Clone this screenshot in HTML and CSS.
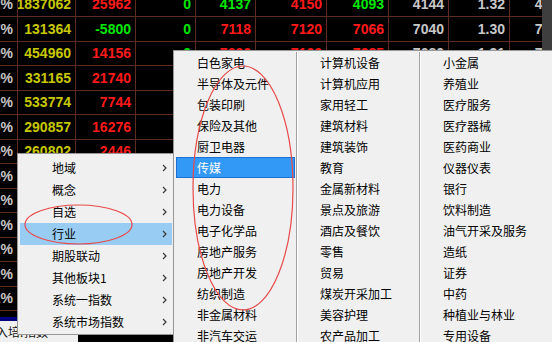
FILE: index.html
```html
<!DOCTYPE html>
<html lang="zh">
<head>
<meta charset="utf-8">
<title>行业菜单</title>
<link rel="stylesheet" href="styles.css">
</head>
<body>
<div class="screen">
  <div class="quote">
    <div class="board">
      <div class="grid">
        <div class="row"><span class="c w">0.52%</span><span class="c y">1837062</span><span class="c r">25962</span><span class="c g">0</span><span class="c g">4137</span><span class="c r">4150</span><span class="c g">4093</span><span class="c w">4144</span><span class="c w">1.32</span><span class="c w">4140</span></div>
        <div class="row"><span class="c w">1.77%</span><span class="c y">131364</span><span class="c g">-5800</span><span class="c g">0</span><span class="c r">7118</span><span class="c r">7120</span><span class="c r">7066</span><span class="c w">7040</span><span class="c w">1.30</span><span class="c w">7045</span></div>
        <div class="row"><span class="c w">0.90%</span><span class="c y">454960</span><span class="c r">14156</span><span class="c g">0</span><span class="c r">7096</span><span class="c r">7100</span><span class="c r">7085</span><span class="c w">7080</span><span class="c w">1.31</span><span class="c w">7082</span></div>
        <div class="row"><span class="c w">2.10%</span><span class="c y">331165</span><span class="c r">21740</span><span class="c g">0</span><span class="c r">5210</span><span class="c r">5232</span><span class="c r">5180</span><span class="c w">5170</span><span class="c w">1.28</span><span class="c w">5176</span></div>
        <div class="row"><span class="c w">0.63%</span><span class="c y">533774</span><span class="c r">7744</span><span class="c g">0</span><span class="c r">3862</span><span class="c r">3870</span><span class="c g">3841</span><span class="c w">3850</span><span class="c w">1.22</span><span class="c w">3855</span></div>
        <div class="row"><span class="c w">1.26%</span><span class="c y">290857</span><span class="c r">16276</span><span class="c g">0</span><span class="c r">6021</span><span class="c r">6040</span><span class="c r">6002</span><span class="c w">5990</span><span class="c w">1.19</span><span class="c w">5996</span></div>
        <div class="row"><span class="c w">0.35%</span><span class="c y">260802</span><span class="c r">2446</span><span class="c g">0</span><span class="c r">2731</span><span class="c r">2740</span><span class="c g">2715</span><span class="c w">2720</span><span class="c w">1.15</span><span class="c w">2722</span></div>
        <div class="row"><span class="c w">1.05%</span><span class="c y">185620</span><span class="c r">9312</span><span class="c g">0</span><span class="c r">4410</span><span class="c r">4422</span><span class="c r">4398</span><span class="c w">4390</span><span class="c w">1.12</span><span class="c w">4394</span></div>
        <div class="row"><span class="c w">0.42%</span><span class="c y">97340</span><span class="c r">3188</span><span class="c g">0</span><span class="c r">1980</span><span class="c r">1992</span><span class="c g">1970</span><span class="c w">1975</span><span class="c w">1.10</span><span class="c w">1978</span></div>
        <div class="row"><span class="c w">0.12%</span><span class="c y">412530</span><span class="c r">12804</span><span class="c g">0</span><span class="c r">8230</span><span class="c r">8244</span><span class="c r">8211</span><span class="c w">8200</span><span class="c w">1.08</span><span class="c w">8205</span></div>
        <div class="row"><span class="c w">2.72%</span><span class="c y">76215</span><span class="c g">-1320</span><span class="c g">0</span><span class="c r">3310</span><span class="c r">3321</span><span class="c g">3290</span><span class="c w">3300</span><span class="c w">1.05</span><span class="c w">3302</span></div>
        <div class="row"><span class="c w">1.32%</span><span class="c y">158840</span><span class="c r">6620</span><span class="c g">0</span><span class="c r">2950</span><span class="c r">2961</span><span class="c r">2944</span><span class="c w">2940</span><span class="c w">1.02</span><span class="c w">2942</span></div>
        <div class="row"><span class="c w">0.82%</span><span class="c y">221470</span><span class="c r">8870</span><span class="c g">0</span><span class="c r">5120</span><span class="c r">5131</span><span class="c r">5109</span><span class="c w">5100</span><span class="c w">1.01</span><span class="c w">5104</span></div>
        <div class="row"><span class="c w">0.22%</span><span class="c y">64210</span><span class="c r">1105</span><span class="c g">0</span><span class="c r">1770</span><span class="c r">1778</span><span class="c g">1762</span><span class="c w">1765</span><span class="c w">0.98</span><span class="c w">1767</span></div>
      </div>
      <div class="scrollbar"></div>
    </div>
    <div class="navy"></div>
    <div class="tabs">
      <span class="tab t1">入培:</span>
      <span class="tab t2">指数</span>
      <span class="tabfill"></span>
    </div>
  </div>

  <div class="menu">
    <div class="mi"><span class="lbl">地域</span><svg class="arr" width="5" height="8" viewBox="0 0 5 8"><path d="M1 1 L4 4 L1 7"/></svg></div>
    <div class="mi"><span class="lbl">概念</span><svg class="arr" width="5" height="8" viewBox="0 0 5 8"><path d="M1 1 L4 4 L1 7"/></svg></div>
    <div class="mi"><span class="lbl">自选</span><svg class="arr" width="5" height="8" viewBox="0 0 5 8"><path d="M1 1 L4 4 L1 7"/></svg></div>
    <div class="mi hot"><span class="lbl">行业</span><svg class="arr" width="5" height="8" viewBox="0 0 5 8"><path d="M1 1 L4 4 L1 7"/></svg></div>
    <div class="mi"><span class="lbl">期股联动</span><svg class="arr" width="5" height="8" viewBox="0 0 5 8"><path d="M1 1 L4 4 L1 7"/></svg></div>
    <div class="mi"><span class="lbl">其他板块1</span><svg class="arr" width="5" height="8" viewBox="0 0 5 8"><path d="M1 1 L4 4 L1 7"/></svg></div>
    <div class="mi"><span class="lbl">系统一指数</span><svg class="arr" width="5" height="8" viewBox="0 0 5 8"><path d="M1 1 L4 4 L1 7"/></svg></div>
    <div class="mi"><span class="lbl">系统市场指数</span><svg class="arr" width="5" height="8" viewBox="0 0 5 8"><path d="M1 1 L4 4 L1 7"/></svg></div>
  </div>

  <div class="submenu">
    <div class="col col1">
      <div class="si">白色家电</div>
      <div class="si">半导体及元件</div>
      <div class="si">包装印刷</div>
      <div class="si">保险及其他</div>
      <div class="si">厨卫电器</div>
      <div class="si sel">传媒</div>
      <div class="si">电力</div>
      <div class="si">电力设备</div>
      <div class="si">电子化学品</div>
      <div class="si">房地产服务</div>
      <div class="si">房地产开发</div>
      <div class="si">纺织制造</div>
      <div class="si">非金属材料</div>
      <div class="si">非汽车交运</div>
    </div>
    <div class="sep"></div>
    <div class="col col2">
      <div class="si">计算机设备</div>
      <div class="si">计算机应用</div>
      <div class="si">家用轻工</div>
      <div class="si">建筑材料</div>
      <div class="si">建筑装饰</div>
      <div class="si">教育</div>
      <div class="si">金属新材料</div>
      <div class="si">景点及旅游</div>
      <div class="si">酒店及餐饮</div>
      <div class="si">零售</div>
      <div class="si">贸易</div>
      <div class="si">煤炭开采加工</div>
      <div class="si">美容护理</div>
      <div class="si">农产品加工</div>
    </div>
    <div class="sep"></div>
    <div class="col col3">
      <div class="si">小金属</div>
      <div class="si">养殖业</div>
      <div class="si">医疗服务</div>
      <div class="si">医疗器械</div>
      <div class="si">医药商业</div>
      <div class="si">仪器仪表</div>
      <div class="si">银行</div>
      <div class="si">饮料制造</div>
      <div class="si">油气开采及服务</div>
      <div class="si">造纸</div>
      <div class="si">证券</div>
      <div class="si">中药</div>
      <div class="si">种植业与林业</div>
      <div class="si">专用设备</div>
    </div>
  </div>

  <svg class="marks" width="552" height="342" viewBox="0 0 552 342">
    <ellipse cx="78.5" cy="224.5" rx="53.5" ry="19.5"/>
    <ellipse cx="243" cy="188" rx="50" ry="122"/>
  </svg>
</div>
</body>
</html>
```

FILE: styles.css
```css
html, body {
  margin: 0;
  padding: 0;
  background: #000;
}

.screen {
  position: relative;
  width: 552px;
  height: 342px;
  overflow: hidden;
  background: #000;
  font-family: "Liberation Sans", Arial, sans-serif;
}

.quote {
  display: flex;
  flex-direction: column;
  height: 342px;
}

.board {
  display: flex;
  height: 317px;
  overflow: hidden;
  flex: none;
}

.grid {
  flex: none;
  width: 542px;
  height: 325px;
  margin-top: -7.5px;
  overflow: hidden;
}

.row {
  display: grid;
  grid-template-columns: 18px 58px 60px 60px 60px 71px 62px 60px 61px 60px;
  width: 570px;
  height: 24.5px;
  box-sizing: border-box;
  border-bottom: 1px solid #5e2c1e;
}

.c {
  display: flex;
  justify-content: flex-end;
  align-items: center;
  padding-right: 4px;
  box-sizing: border-box;
  border-right: 1px solid #5e2c1e;
  overflow: hidden;
  white-space: nowrap;
  font-weight: bold;
  font-size: 14px;
}

.c:last-child {
  border-right: 0;
}

.y { color: #c8c800; }
.r { color: #ff1a1a; }
.g { color: #00e600; }
.w { color: #c8c8c8; }

.scrollbar {
  flex: none;
  width: 10px;
  background: #3e3e3e;
}

.navy {
  flex: none;
  height: 4px;
  background: #00007c;
}

.tabs {
  flex: 1;
  display: flex;
  align-items: center;
  background: #f0f0f0;
  font: 12px "Noto Sans CJK SC", sans-serif;
  color: #111;
  overflow: hidden;
}

.tab {
  flex: none;
  white-space: nowrap;
}

.t1 {
  width: 26px;
  margin-left: -4px;
}

.t2 {
  width: 56px;
  padding-left: 2px;
  box-sizing: border-box;
}

.tabfill {
  flex: 1;
  align-self: stretch;
  background: #000;
}

/* main popup menu */
.menu {
  position: absolute;
  left: 17px;
  top: 153px;
  width: 157px;
  box-sizing: border-box;
  border: 1px solid #979797;
  background: #f0f0f0;
  padding: 3px 1px 1px 2px;
  font: 12px "Noto Sans CJK SC", sans-serif;
  color: #000;
}

.mi {
  height: 22px;
  display: flex;
  align-items: center;
  padding-left: 32px;
  padding-right: 5px;
}

.mi .lbl {
  flex: 1;
  line-height: 22px;
  white-space: nowrap;
}

.mi.hot {
  background: #99ccf3;
}

.arr {
  flex: none;
}

.arr path {
  fill: none;
  stroke: #3a3a3a;
  stroke-width: 1.2;
}

/* industry submenu */
.submenu {
  position: absolute;
  left: 173px;
  top: 50px;
  width: 420px;
  height: 320px;
  box-sizing: border-box;
  border: 1px solid #979797;
  background: #f0f0f0;
  padding-top: 1px;
  display: flex;
  font: 12px "Noto Sans CJK SC", sans-serif;
  color: #000;
}

.col {
  flex: none;
}

.col1 { width: 122px; }
.col2 { width: 121px; }
.col3 { flex: 1; }

.sep {
  flex: none;
  width: 1px;
  background: #a0a0a0;
  border-right: 1px solid #ffffff;
}

.si {
  height: 21px;
  line-height: 21px;
  margin: 0 1px 0 2px;
  padding-left: 20px;
  white-space: nowrap;
}

.col1 .si {
  padding-left: 21px;
}

.si.sel {
  background: #3399f7;
  box-shadow: inset 0 0 0 1px #1c72d4;
  color: #fff;
}

/* hand-drawn annotation marks */
.marks {
  position: absolute;
  left: 0;
  top: 0;
  pointer-events: none;
}

.marks ellipse {
  fill: none;
  stroke: #e84a4a;
  stroke-width: 1.2;
}
```
